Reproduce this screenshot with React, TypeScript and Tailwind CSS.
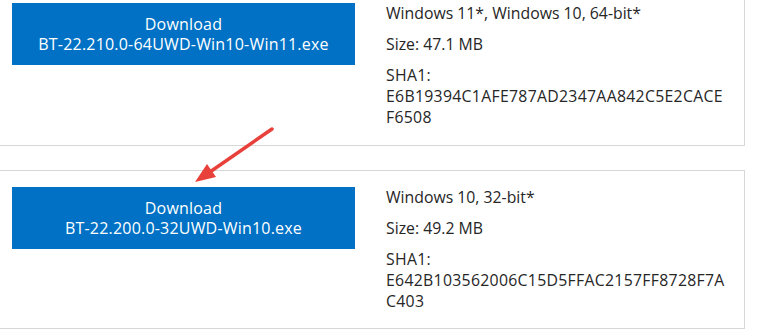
import React from "react";

type Item = {
  file: string;
  os: string;
  size: string;
  sha: [string, string];
};

const items: Item[] = [
  {
    file: "BT-22.210.0-64UWD-Win10-Win11.exe",
    os: "Windows 11*, Windows 10, 64-bit*",
    size: "Size: 47.1 MB",
    sha: ["E6B19394C1AFE787AD2347AA842C5E2CACE", "F6508"],
  },
  {
    file: "BT-22.200.0-32UWD-Win10.exe",
    os: "Windows 10, 32-bit*",
    size: "Size: 49.2 MB",
    sha: ["E642B103562006C15D5FFAC2157FF8728F7A", "C403"],
  },
];

function DownloadCard({ item, className }: { item: Item; className?: string }) {
  return (
    <div
      className={`flex border border-[#d7d7d7] pl-[12px] pr-[14px] pt-[16px] ${className ?? ""}`}
    >
      <button className="flex h-[62px] w-[343px] shrink-0 flex-col items-center justify-center bg-[#0071c5] text-[16px] leading-[20px] tracking-[0.2px] text-white">
        <span>Download</span>
        <span>{item.file}</span>
      </button>
      <div className="ml-[31px] text-[15.8px] leading-[21px] text-[#262626]">
        <p>{item.os}</p>
        <p className="mt-[10px]">{item.size}</p>
        <p className="mt-[10px] tracking-[0.3px]">
          SHA1:
          <br />
          {item.sha[0]}
          <br />
          {item.sha[1]}
        </p>
      </div>
    </div>
  );
}

export default function App() {
  return (
    <div
      className="relative h-[335px] w-[768px] overflow-hidden bg-white"
      style={{ fontFamily: '"Open Sans", "Noto Sans", sans-serif' }}
    >
      <div className="ml-[-1px] w-[746px]">
        <DownloadCard item={items[0]} className="mt-[-13px] border-t-0 pb-[17px]" />
        <DownloadCard item={items[1]} className="mt-[24px] pb-[16px]" />
      </div>
      <svg
        className="pointer-events-none absolute left-0 top-0"
        width="768"
        height="335"
        viewBox="0 0 768 335"
      >
        <line
          x1="272"
          y1="129"
          x2="207"
          y2="174"
          stroke="#e8413b"
          strokeWidth="3.5"
          strokeLinecap="round"
        />
        <polygon points="195,182 207,164 216,177" fill="#e8413b" />
      </svg>
    </div>
  );
}
